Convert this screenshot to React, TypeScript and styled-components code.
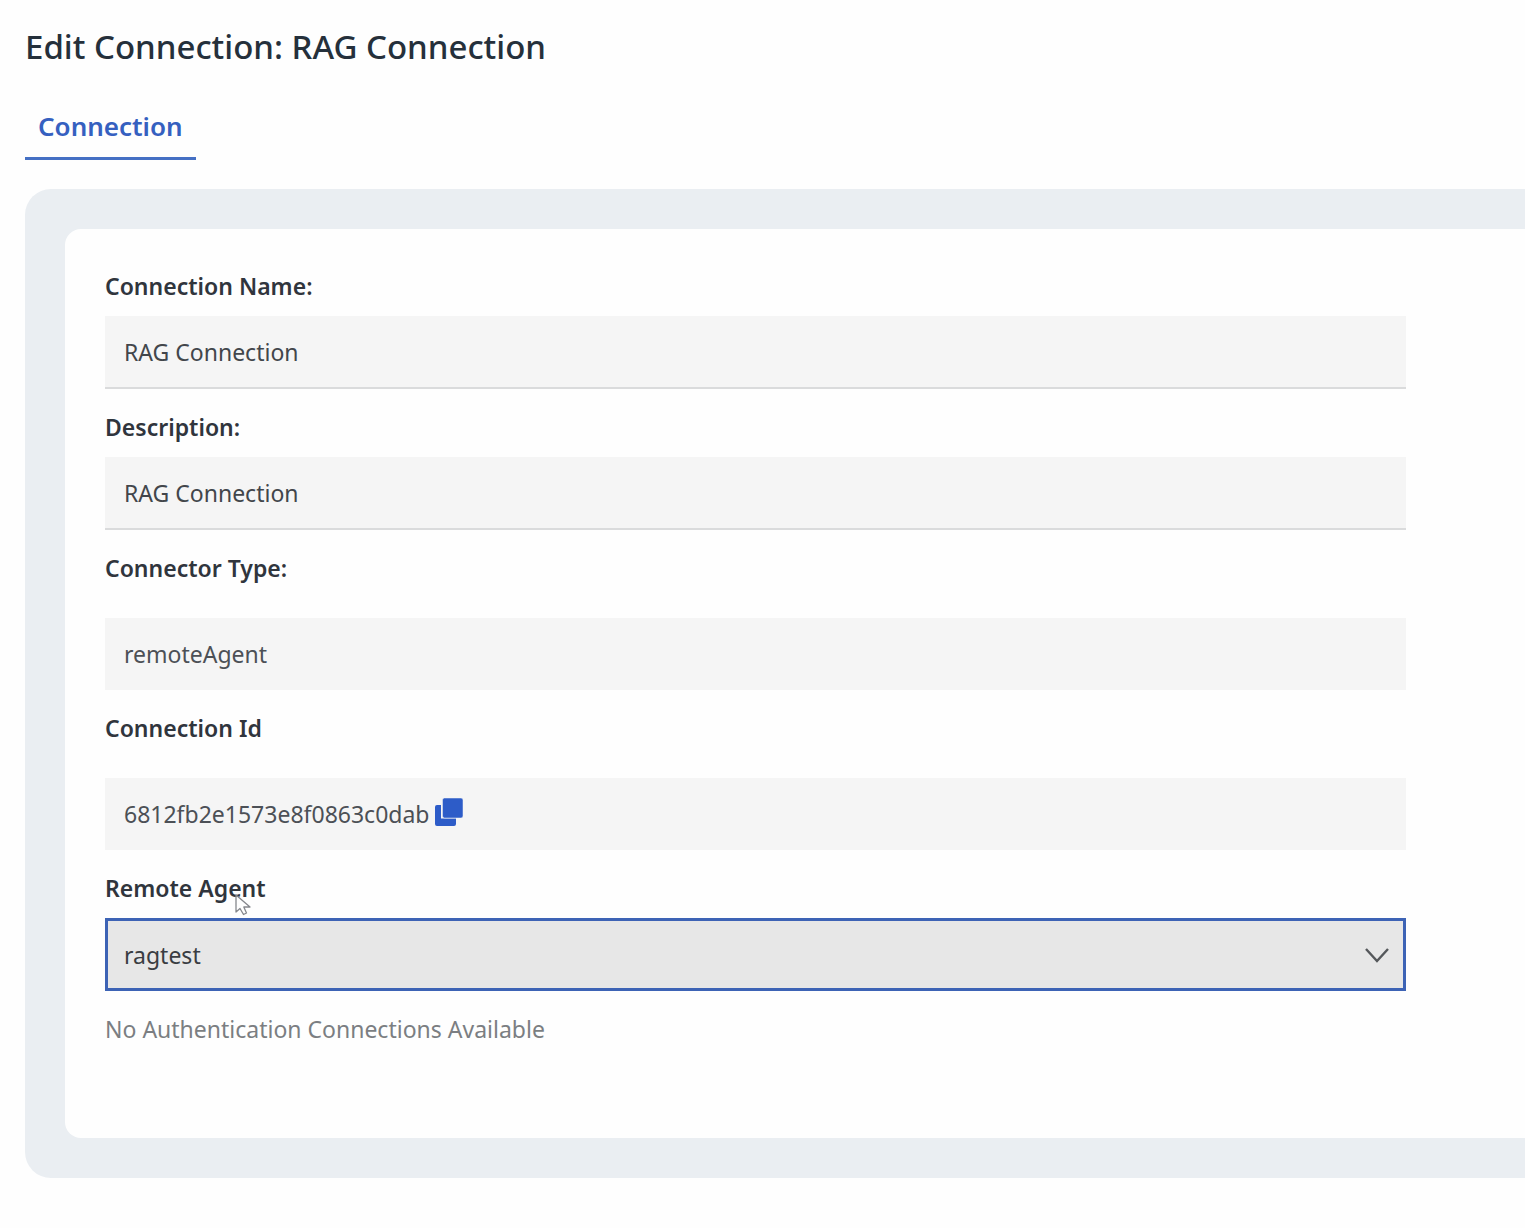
import React from "react";
import styled, { createGlobalStyle } from "styled-components";

const GlobalStyle = createGlobalStyle`
  *, *::before, *::after { box-sizing: border-box; }
  body {
    margin: 0;
    background: #fefefe;
    color: #2b3038;
    font-family: "Noto Sans", "Open Sans", sans-serif;
    font-size: 23px;
    line-height: 32px;
  }
`;

const Page = styled.main`
  display: flex;
  flex-direction: column;
  align-items: stretch;
  padding: 24px 0 50px 25px;
`;

const Title = styled.h1`
  margin: 0;
  color: #25303b;
  font-size: 33px;
  font-weight: 500;
  line-height: 46px;
`;

const Tabs = styled.nav`
  display: flex;
  margin: 26px 0 29px;
`;

const Tab = styled.a`
  padding: 14px 13px 15px;
  border-bottom: 3px solid #4570c4;
  color: #3560c0;
  font-size: 26px;
  font-weight: 600;
  line-height: 32px;
  text-decoration: none;
`;

const Panel = styled.section`
  padding: 40px 0 40px 40px;
  border-radius: 26px 0 0 26px;
  background: #eaeef2;
`;

const Card = styled.div`
  padding: 41px 119px 93px 40px;
  border-radius: 16px 0 0 16px;
  background: #fefefe;
`;

const Form = styled.form`
  display: flex;
  flex-direction: column;
  gap: 22px;
`;

const Field = styled.div<{ $spaced?: boolean }>`
  display: flex;
  flex-direction: column;
  gap: ${({ $spaced }) => ($spaced ? "34px" : "14px")};
`;

const Label = styled.label`
  align-self: flex-start;
  position: relative;
  color: #30353d;
  font-weight: 600;
`;

const TextInput = styled.input`
  width: 100%;
  height: 73px;
  padding: 0 19px;
  border: 0;
  border-bottom: 2px solid #dadbdc;
  border-radius: 0;
  outline: 0;
  background: #f5f5f5;
  color: #42464b;
  font: inherit;
`;

const ReadOnlyBox = styled.div`
  display: flex;
  align-items: center;
  gap: 5px;
  height: 72px;
  padding: 0 19px;
  background: #f5f5f5;
  color: #4c5056;
`;

const CopyButton = styled.button`
  display: flex;
  padding: 0 0 4px;
  border: 0;
  background: none;
  cursor: pointer;
`;

const SelectWrap = styled.div`
  display: grid;
  align-items: center;

  > * { grid-area: 1 / 1; }
  > svg {
    justify-self: end;
    margin-right: 16px;
    pointer-events: none;
  }
`;

const Select = styled.select`
  width: 100%;
  height: 73px;
  padding: 0 16px;
  border: 3px solid #3d63b5;
  border-radius: 0;
  outline: 0;
  appearance: none;
  background: #e7e7e7;
  color: #3a3d42;
  font: inherit;
`;

const Hint = styled.p`
  margin: 0;
  color: #7b7e82;
`;

const Pointer = styled.svg`
  position: absolute;
  left: 129px;
  top: 21px;
  pointer-events: none;
`;

const CopyIcon = () => (
  <svg width="28" height="28" viewBox="0 0 28 28" aria-hidden="true">
    <path d="M2 7H6V20.500H21V26a2 2 0 0 1-2 2H2a2 2 0 0 1-2-2V9a2 2 0 0 1 2-2Z" fill="#2d5cc8" />
    <rect x="7.500" y="0" width="20.500" height="20" rx="2" fill="#2d5cc8" stroke="#f5f5f5" strokeWidth="0.500" />
  </svg>
);

const ChevronIcon = () => (
  <svg width="26" height="16" viewBox="0 0 26 16" fill="none" aria-hidden="true">
    <path d="M2 2L13 14L24 2" stroke="#55585b" strokeWidth="2.4" />
  </svg>
);

const PointerIcon = () => (
  <Pointer width="18" height="24" viewBox="0 0 18 24" aria-hidden="true">
    <path
      d="M2 2V19L6 15.500L9.500 21.500L12.500 20L9.800 14H16Z"
      fill="#fefefe"
      stroke="#85878c"
      strokeWidth="1.3"
      strokeLinejoin="round"
    />
  </Pointer>
);

export default function App() {
  return (
    <>
      <GlobalStyle />
      <Page>
        <Title>Edit Connection: RAG Connection</Title>
        <Tabs>
          <Tab href="#connection" aria-current="page">Connection</Tab>
        </Tabs>
        <Panel id="connection">
          <Card>
            <Form>
              <Field>
                <Label htmlFor="name">Connection Name:</Label>
                <TextInput id="name" defaultValue="RAG Connection" />
              </Field>
              <Field>
                <Label htmlFor="description">Description:</Label>
                <TextInput id="description" defaultValue="RAG Connection" />
              </Field>
              <Field $spaced>
                <Label as="span">Connector Type:</Label>
                <ReadOnlyBox>remoteAgent</ReadOnlyBox>
              </Field>
              <Field $spaced>
                <Label as="span">Connection Id</Label>
                <ReadOnlyBox>
                  <span>6812fb2e1573e8f0863c0dab</span>
                  <CopyButton type="button" aria-label="Copy connection id">
                    <CopyIcon />
                  </CopyButton>
                </ReadOnlyBox>
              </Field>
              <Field>
                <Label htmlFor="agent">
                  Remote Agent
                  <PointerIcon />
                </Label>
                <SelectWrap>
                  <Select id="agent" defaultValue="ragtest">
                    <option value="ragtest">ragtest</option>
                  </Select>
                  <ChevronIcon />
                </SelectWrap>
              </Field>
              <Hint>No Authentication Connections Available</Hint>
            </Form>
          </Card>
        </Panel>
      </Page>
    </>
  );
}
